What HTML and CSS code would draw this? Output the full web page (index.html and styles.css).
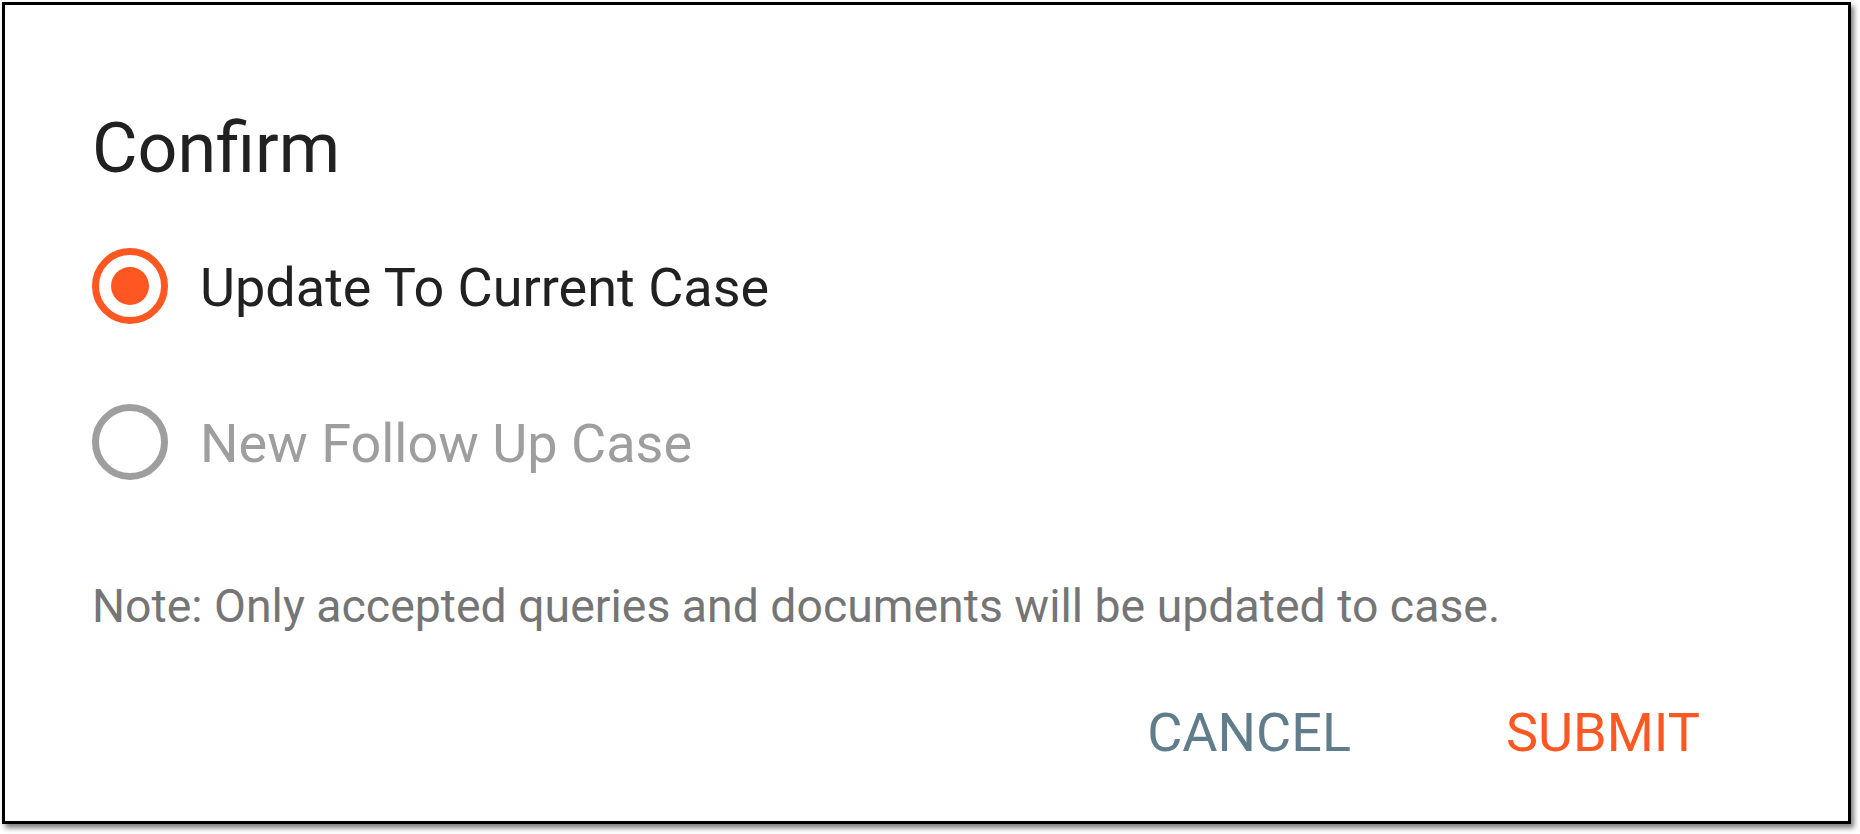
FILE: index.html
```html
<!DOCTYPE html>
<html lang="en">
<head>
<meta charset="utf-8">
<title>Confirm</title>
<link rel="stylesheet" href="styles.css">
</head>
<body>
<div class="dialog">
  <h1 class="title">Confirm</h1>
  <div class="options">
    <label class="option checked">
      <span class="radio"><span class="dot"></span></span>
      <span class="label">Update To Current Case</span>
    </label>
    <label class="option disabled">
      <span class="radio"></span>
      <span class="label">New Follow Up Case</span>
    </label>
  </div>
  <p class="note">Note: Only accepted queries and documents will be updated to case.</p>
  <div class="actions">
    <button class="btn cancel">CANCEL</button>
    <button class="btn submit">SUBMIT</button>
  </div>
</div>
</body>
</html>
```
FILE: styles.css
```css
html, body {
  margin: 0;
  padding: 0;
  background: #ffffff;
}
body {
  font-family: Roboto, "Liberation Sans", sans-serif;
  width: 1860px;
  height: 834px;
  overflow: hidden;
}
.dialog {
  box-sizing: border-box;
  margin: 2px 0 0 2px;
  width: 1849px;
  height: 822px;
  border: 3px solid #000;
  background: #fff;
  box-shadow: 3px 4px 5px rgba(0, 0, 0, 0.5);
  padding: 101px 0 0 87px;
  display: flex;
  flex-direction: column;
}
.title {
  margin: 0;
  font-size: 70px;
  line-height: 84px;
  font-weight: 400;
  color: #212121;
}
.options {
  margin-top: 58px;
  display: flex;
  flex-direction: column;
  gap: 80px;
}
.option {
  display: flex;
  align-items: center;
  gap: 32px;
  height: 76px;
}
.radio {
  box-sizing: border-box;
  width: 76px;
  height: 76px;
  border-radius: 50%;
  border: 7px solid #9e9e9e;
  display: flex;
  align-items: center;
  justify-content: center;
  flex: none;
}
.checked .radio {
  border-color: #ff5722;
}
.dot {
  width: 38px;
  height: 38px;
  border-radius: 50%;
  background: #ff5722;
}
.label {
  font-size: 54px;
  line-height: 76px;
  padding-top: 3px;
  color: #212121;
}
.disabled .label {
  color: #9e9e9e;
}
.note {
  margin: 0;
  margin-top: 98px;
  font-size: 46.4px;
  line-height: 56px;
  color: #757575;
}
.actions {
  display: flex;
  justify-content: flex-end;
  gap: 155px;
  padding-right: 148px;
  margin-top: 67px;
}
.btn {
  font-family: Roboto, "Liberation Sans", sans-serif;
  font-size: 54px;
  line-height: 64px;
  border: none;
  background: none;
  padding: 0;
  cursor: pointer;
}
.cancel {
  color: #607d8b;
}
.submit {
  color: #ff5722;
}
```
